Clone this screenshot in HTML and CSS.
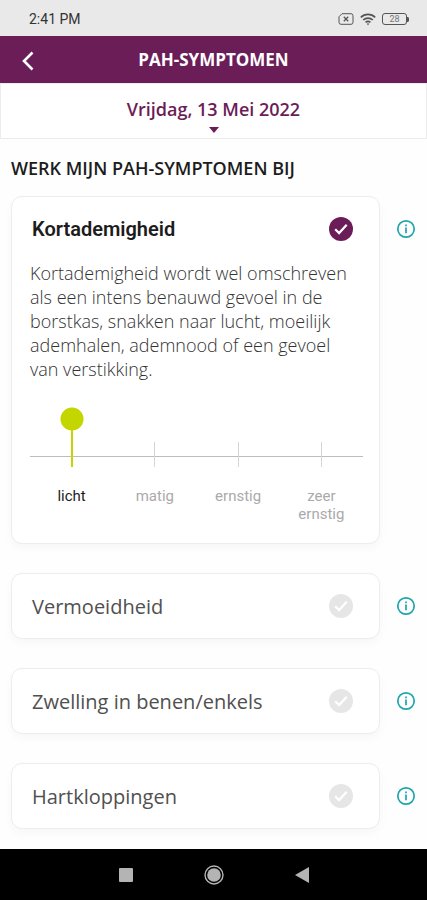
FILE: index.html
```html
<!DOCTYPE html>
<html lang="nl">
<head>
    <meta charset="UTF-8">
    <meta name="viewport" content="width=device-width, initial-scale=1.0">
    <title>PAH-symptomen</title>
    <link rel="stylesheet" href="styles.css">
</head>
<body>
    <!-- Shared icons -->
    <svg class="icon-defs" width="0" height="0" aria-hidden="true">
        <symbol id="icon-check" viewBox="0 0 24 24">
            <circle cx="12" cy="12" r="12" fill="currentColor"/>
            <path d="M6.2 12.3l3.9 3.8 7.6-8.4" fill="none" stroke="#fff" stroke-width="2.2"/>
        </symbol>
        <symbol id="icon-info" viewBox="0 0 20 20">
            <circle cx="10" cy="10" r="8.2" fill="none" stroke="currentColor" stroke-width="1.7"/>
            <path d="M10 8.6v5.6M10 5.6v1.6" fill="none" stroke="currentColor" stroke-width="1.7"/>
        </symbol>
    </svg>

    <div class="status-bar">
        <span>2:41 PM</span>
        <div class="status-icons">
            <svg width="16" height="12" viewBox="0 0 16 12" fill="none" stroke="#555">
                <path d="M4 .7h9a2 2 0 0 1 2 2v6.6a2 2 0 0 1-2 2H3a2 2 0 0 1-2-2V3.7z"/>
                <path d="M5.8 3.8l4.4 4.4M10.2 3.8L5.8 8.2" stroke-width="1.3"/>
            </svg>
            <svg width="16" height="13" viewBox="0 0 16 13" fill="none" stroke="#555" stroke-width="1.7">
                <path d="M.8 4.3a10.4 10.4 0 0 1 14.4 0M3.2 7a7 7 0 0 1 9.6 0M5.6 9.4a3.6 3.6 0 0 1 4.8 0"/>
                <path d="M6.8 10.6h2.4L8 12.4z" fill="#555" stroke="none"/>
            </svg>
            <div class="battery">
                <span>28</span>
                <svg width="2" height="5" viewBox="0 0 2 5"><path d="M0 0h1l1 1v3L1 5H0z" fill="#555"/></svg>
            </div>
        </div>
    </div>

    <header class="app-header">
        <button class="back-button" aria-label="Terug">
            <svg width="12" height="20" viewBox="0 0 12 20" fill="none" stroke="#fff" stroke-width="2.6">
                <path d="M10.5 1.5L2 10l8.5 8.5"/>
            </svg>
        </button>
        <h1>PAH-SYMPTOMEN</h1>
    </header>

    <button class="date-picker">
        <span>Vrijdag, 13 Mei 2022</span>
        <svg width="10" height="6" viewBox="0 0 10 6"><path d="M0 0h10L5 6z" fill="#6b1d58"/></svg>
    </button>

    <main>
        <h2>WERK MIJN PAH-SYMPTOMEN BIJ</h2>

        <section class="symptom">
            <div class="card open">
                <div class="card-head">
                    <label for="kortademigheid">Kortademigheid</label>
                    <span class="check">
                        <input type="checkbox" id="kortademigheid" checked>
                        <svg><use href="#icon-check"/></svg>
                    </span>
                </div>
                <p>Kortademigheid wordt wel omschreven als een intens benauwd gevoel in de borstkas, snakken naar lucht, moeilijk ademhalen, ademnood of een gevoel van verstikking.</p>
                <div class="scale">
                    <div class="scale-line"></div>
                    <div class="ticks"><i></i><i></i><i></i><i></i></div>
                    <input type="range" min="0" max="3" value="0" aria-label="Ernst van kortademigheid">
                </div>
                <div class="scale-labels">
                    <span class="active">licht</span>
                    <span>matig</span>
                    <span>ernstig</span>
                    <span>zeer ernstig</span>
                </div>
            </div>
            <button class="info" aria-label="Info over kortademigheid"><svg><use href="#icon-info"/></svg></button>
        </section>

        <section class="symptom">
            <div class="card">
                <div class="card-head">
                    <label for="vermoeidheid">Vermoeidheid</label>
                    <span class="check">
                        <input type="checkbox" id="vermoeidheid">
                        <svg><use href="#icon-check"/></svg>
                    </span>
                </div>
            </div>
            <button class="info" aria-label="Info over vermoeidheid"><svg><use href="#icon-info"/></svg></button>
        </section>

        <section class="symptom">
            <div class="card">
                <div class="card-head">
                    <label for="zwelling">Zwelling in benen/enkels</label>
                    <span class="check">
                        <input type="checkbox" id="zwelling">
                        <svg><use href="#icon-check"/></svg>
                    </span>
                </div>
            </div>
            <button class="info" aria-label="Info over zwelling"><svg><use href="#icon-info"/></svg></button>
        </section>

        <section class="symptom">
            <div class="card">
                <div class="card-head">
                    <label for="hartkloppingen">Hartkloppingen</label>
                    <span class="check">
                        <input type="checkbox" id="hartkloppingen">
                        <svg><use href="#icon-check"/></svg>
                    </span>
                </div>
            </div>
            <button class="info" aria-label="Info over hartkloppingen"><svg><use href="#icon-info"/></svg></button>
        </section>
    </main>

    <nav class="system-nav">
        <button aria-label="Recente apps">
            <svg width="20" height="20" viewBox="0 0 20 20"><rect x="3" y="3" width="14" height="14" rx="1" fill="#b4b4b4"/></svg>
        </button>
        <button aria-label="Startscherm">
            <svg width="20" height="20" viewBox="0 0 20 20">
                <circle cx="10" cy="10" r="9" fill="none" stroke="#b4b4b4" stroke-width="1.4"/>
                <circle cx="10" cy="10" r="6.8" fill="#b4b4b4"/>
            </svg>
        </button>
        <button aria-label="Vorige">
            <svg width="20" height="20" viewBox="0 0 20 20"><path d="M17 2v16L3 10z" fill="#b4b4b4"/></svg>
        </button>
    </nav>
</body>
</html>
```
FILE: styles.css
```css
* {
    box-sizing: border-box;
}
body {
    margin: 0;
    min-height: 100vh;
    display: flex;
    flex-direction: column;
    background-color: #fefefe;
    color: #1c1c1c;
    font-family: "Open Sans", sans-serif;
}
button {
    padding: 0;
    border: none;
    background: none;
    font-family: inherit;
    cursor: pointer;
}
svg {
    display: block;
}
.icon-defs {
    display: none;
}
.status-bar {
    display: flex;
    justify-content: space-between;
    align-items: center;
    height: 36px;
    padding: 2px 18px 0 29px;
    background-color: #e9e9e9;
    color: #333;
    font-family: Roboto, sans-serif;
    font-size: 14px;
    font-weight: 400;
}
.status-icons {
    display: flex;
    align-items: center;
    gap: 6px;
}
.battery {
    display: flex;
    align-items: center;
}
.battery span {
    width: 25px;
    height: 12px;
    border: 1px solid #555;
    border-radius: 3px;
    color: #777;
    font-size: 9px;
    line-height: 10px;
    text-align: center;
}
.app-header {
    display: grid;
    grid-template-columns: 56px 1fr 56px;
    align-items: center;
    height: 47px;
    background-color: #6b1d58;
    color: #fff;
}
.back-button {
    display: flex;
    justify-content: center;
    padding-top: 2px;
}
.app-header h1 {
    margin: 0;
    font-size: 17px;
    font-weight: 700;
    line-height: 24px;
    text-align: center;
}
.date-picker {
    display: flex;
    flex-direction: column;
    align-items: center;
    gap: 6px;
    height: 56px;
    padding-top: 13px;
    border: 1px solid #ececec;
    background-color: #fff;
    color: #6b1d58;
    font-size: 18px;
    font-weight: 600;
    line-height: 24px;
}
main {
    flex: 1;
    display: flex;
    flex-direction: column;
    gap: 29px;
    padding: 17px 11px 20px;
}
main h2 {
    margin: 0 0 -13px;
    font-size: 18px;
    font-weight: 600;
    line-height: 24px;
}
.symptom {
    display: grid;
    grid-template-columns: 1fr 20px;
    gap: 16px;
    align-items: start;
}
.card {
    padding: 0 16px 0 18px;
    border: 1px solid #ededed;
    border-radius: 11px;
    background-color: #fff;
    box-shadow: 0 4px 10px rgba(0, 0, 0, 0.03);
}
.card-head {
    display: flex;
    justify-content: space-between;
    align-items: center;
    height: 64px;
    padding: 0 10px 0 2px;
    color: #505050;
    font-size: 20px;
}
.open .card-head {
    color: #1c1c1c;
    font-family: Roboto, sans-serif;
    font-weight: 600;
}
.check {
    display: grid;
    width: 24px;
    height: 24px;
}
.check input,
.check svg {
    grid-area: 1 / 1;
    width: 24px;
    height: 24px;
    margin: 0;
}
.check input {
    appearance: none;
}
.check svg {
    color: #e6e6e6;
    pointer-events: none;
}
.check input:checked + svg {
    color: #6b1d58;
}
.info {
    display: flex;
    align-items: center;
    height: 66px;
    color: #1fa5ad;
}
.info svg {
    width: 20px;
    height: 20px;
}
.card p {
    margin: 0 0 26px;
    color: #333;
    font-size: 18px;
    font-weight: 300;
    line-height: 24px;
}
.scale {
    display: grid;
    height: 60px;
}
.scale > * {
    grid-area: 1 / 1;
}
.scale-line {
    align-self: end;
    height: 1px;
    margin-bottom: 10px;
    background-color: #bdbdbd;
}
.ticks {
    display: grid;
    grid-template-columns: repeat(4, 1fr);
    justify-items: center;
    align-items: end;
}
.ticks i {
    width: 1px;
    height: 25px;
    background-color: #d5d5d5;
}
.ticks i:first-child {
    visibility: hidden;
}
/* the thumb is a pin: a disc on top of a stem */
.scale input {
    appearance: none;
    width: calc(75% + 24px);
    height: 60px;
    margin: 0;
    justify-self: center;
    background: none;
}
.scale input::-webkit-slider-thumb {
    appearance: none;
    width: 24px;
    height: 60px;
    background:
        radial-gradient(circle at 12px 12px, #c4d600 11px, transparent 12px),
        linear-gradient(#c4d600, #c4d600) 50% 100% / 2px 38px no-repeat;
}
.scale-labels {
    display: grid;
    grid-template-columns: repeat(4, 1fr);
    padding: 20px 0;
    color: #aaa;
    font-family: Roboto, sans-serif;
    font-size: 15px;
    line-height: 18px;
    text-align: center;
}
.scale-labels span {
    padding: 0 16px;
}
.scale-labels .active {
    color: #1c1c1c;
}
.system-nav {
    display: flex;
    justify-content: center;
    align-items: center;
    gap: 68px;
    height: 51px;
    background-color: #000;
}
```
